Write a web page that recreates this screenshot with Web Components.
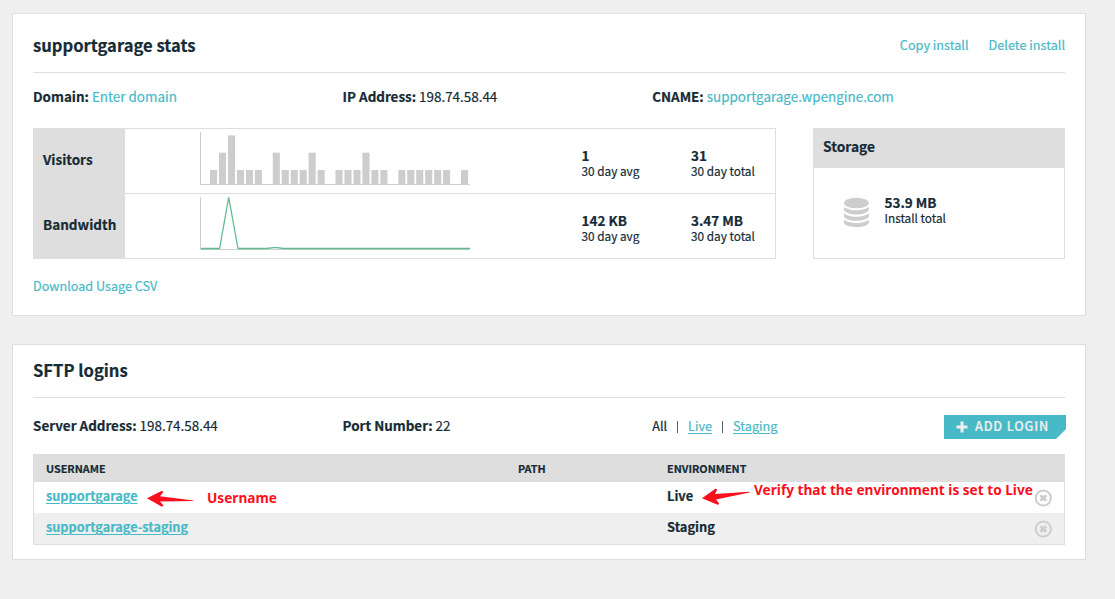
<!DOCTYPE html>
<html lang="en">
<head>
<meta charset="utf-8">
<title>supportgarage stats</title>
<style>
  html, body { margin: 0; height: 100%; background: #efefef; }
  body {
    overflow: hidden;
    --ink: #162b35; --teal: #48b9c7; --line: #dedede; --mark: #cdcdcd; --paper: #fff; --shade: #efefef;
    color: var(--ink);
    font: 13.43px/20px "Noto Sans CJK JP", "Noto Sans CJK SC", "Open Sans", sans-serif;
    -webkit-text-stroke: .2px;
  }
</style>
</head>
<body>
<install-page></install-page>
<script>
const define = (name, html, setup) => {
  const template = document.createElement('template');
  template.innerHTML = html;
  customElements.define(name, class extends HTMLElement {
    connectedCallback() {
      if (this.shadowRoot) return;
      this.attachShadow({ mode: 'open' }).append(template.content.cloneNode(true));
      if (setup) setup(this, this.shadowRoot);
    }
  });
};

define('ui-link', `
  <style>
    :host { display: inline; color: var(--teal); }
    a { color: inherit; text-decoration: none; }
    :host([underlined]) a { text-decoration: underline; text-underline-offset: 2px; text-decoration-thickness: 1px; }
  </style>
  <a><slot></slot></a>`);

define('ui-panel', `
  <style>
    :host { display: block; box-sizing: border-box; width: 1074px; background: var(--paper); border: 1px solid var(--line); padding: 0 20px var(--pad-bottom, 19px); }
    header { display: flex; align-items: center; justify-content: space-between; box-sizing: border-box; height: var(--head, 59px); border-bottom: 1px solid var(--line); }
    h2 { margin: var(--title-top, 4px) 0 0; font-size: 16.6px; line-height: 24px; font-weight: 700; }
    .actions { display: flex; gap: 20px; font-size: 12.7px; padding-top: 4px; }
  </style>
  <header><h2><slot name="title"></slot></h2><div class="actions"><slot name="actions"></slot></div></header>
  <slot></slot>`);

define('info-row', `
  <style>
    :host { display: grid; grid-template-columns: 309.6px 309.6px 1fr; white-space: nowrap; }
  </style>
  <slot></slot>`);

define('info-item', `
  <style>
    :host { display: block; font-size: 13.43px; }
    b { font-weight: 700; font-size: 13.43px; }
  </style>
  <b></b> <slot></slot>`, (el, root) => {
    root.querySelector('b').textContent = el.getAttribute('label');
  });

define('stat-value', `
  <style>
    :host { display: block; line-height: 15px; white-space: nowrap; }
    b { display: block; font-size: 13.5px; }
    small { display: block; font-size: 11.8px; }
  </style>
  <b><slot></slot></b><small></small>`, (el, root) => {
    root.querySelector('small').textContent = el.getAttribute('caption');
  });

define('bar-chart', `
  <style>:host { display: block; width: 270px; height: 53px; } svg { display: block; }</style>
  <svg width="270" height="53"><g fill="#cdcdcd"></g><path d="M.5 0V52.5H270" fill="none" stroke="#cdcdcd"/></svg>`, (el, root) => {
    const tops = [52, 38, 20.7, 3.4];
    root.querySelector('g').innerHTML = [...el.getAttribute('values')].map((v, i) =>
      +v ? `<rect x="${(10 + i * 8.965).toFixed(2)}" y="${tops[v]}" width="7.1" height="${52 - tops[v]}"/>` : '').join('');
  });

define('line-chart', `
  <style>:host { display: block; width: 270px; height: 53px; } svg { display: block; }</style>
  <svg width="270" height="53">
    <path d="M.5 0V52.5H270" fill="none" stroke="#cdcdcd"/>
    <path d="M1 51.5H19.6L28.7 .4L38 51.5H66L74 50.6H77L84 51.5H270" fill="none" stroke="#62bb91" stroke-width="1.3" stroke-linejoin="bevel"/>
  </svg>`);

define('usage-row', `
  <style>
    :host { display: grid; grid-template-columns: 92px 75px 381.5px 109.5px 1fr; height: 65px; box-sizing: border-box; }
    .label { background: var(--line); font-weight: 700; padding: 20px 0 0 10px; font-size: 13.5px; height: 45px; }
    .pad, .chart, ::slotted(stat-value) { border-bottom: 1px solid var(--line); box-sizing: border-box; height: 65px; }
    .chart { padding-top: 3px; }
    ::slotted(stat-value) { padding-top: 19px; }
  </style>
  <div class="label"></div><div class="pad"></div><div class="chart"><slot name="chart"></slot></div><slot></slot>`, (el, root) => {
    root.querySelector('.label').textContent = el.getAttribute('label');
  });

define('usage-table', `
  <style>
    :host { display: block; box-sizing: border-box; width: 743px; height: 131px; border-top: 1px solid var(--line); border-right: 1px solid var(--line); }
  </style>
  <slot></slot>`);

define('storage-card', `
  <style>
    :host { display: block; box-sizing: border-box; width: 252px; height: 131px; border: 1px solid var(--line); }
    header { background: var(--line); height: 39px; line-height: 34px; box-sizing: border-box; padding-left: 9px; font-weight: 700; font-size: 13.8px; }
    .body { display: flex; padding: 27px 0 0 29px; gap: 14.5px; }
    svg { display: block; margin-top: 1.5px; }
  </style>
  <header><slot name="title"></slot></header>
  <div class="body">
    <svg width="27" height="31" viewBox="0 0 27 31" fill="#cdcdcd">
      <ellipse cx="13.4" cy="6" rx="12.4" ry="5.3"/>
      <path d="M1 9.8C5 14.4 21.8 14.4 25.8 9.8V13.3C22 19 4.8 19 1 13.3Z"/>
      <path d="M1 16.3C5 20.9 21.8 20.9 25.8 16.3V19.8C22 25.2 4.8 25.2 1 19.8Z"/>
      <path d="M1 22.6C5 27.2 21.8 27.2 25.8 22.6V26.3C22 31.5 4.8 31.5 1 26.3Z"/>
    </svg>
    <slot></slot>
  </div>`);

define('env-filter', `
  <style>
    :host { display: flex; font-size: 12.7px; }
    i { width: 1px; height: 12px; margin: 5px 10px 0; background: #56646b; }
  </style>
  <span>All</span><i></i><ui-link underlined>Live</ui-link><i></i><ui-link underlined>Staging</ui-link>`);

define('add-button', `
  <style>
    :host { display: flex; align-items: center; box-sizing: border-box; width: 122px; height: 24px; padding-left: 12px; gap: 7px; margin: 0 -1px 0 auto;
      background: var(--teal); color: #efefef; clip-path: polygon(0 0, 100% 0, 100% 14px, 112px 100%, 0 100%); font-size: 12.6px; font-weight: 500; letter-spacing: .85px; white-space: nowrap; }
    span { position: relative; top: -1px; }
  </style>
  <svg width="12" height="12" fill="#efefef"><path d="M4.5 .5h3v4h4v3h-4v4h-3v-4h-4v-3h4z"/></svg><span><slot></slot></span>`);

define('remove-icon', `
  <style>:host { display: block; width: 18px; height: 18px; } svg { display: block; }</style>
  <svg width="18" height="18" fill="none" stroke="#cdcdcd"><circle cx="9.3" cy="9" r="7.6" stroke-width="2"/><path d="M6.500 6.200L12.100 11.800M12.100 6.200L6.500 11.800" stroke-width="2.8"/></svg>`);

define('login-head', `
  <style>
    :host { display: grid; grid-template-columns: 472px 149px 1fr; height: 28px; line-height: 28px; padding-left: 13px; background: var(--line); font-size: 10.8px; font-weight: 700; }
  </style>
  <span>USERNAME</span><span>PATH</span><span>ENVIRONMENT</span>`);

define('login-row', `
  <style>
    :host { display: grid; grid-template-columns: 621px 1fr 18px; height: 31px; line-height: 28px; padding: 0 12px; border: solid var(--line); border-width: 0 1px; font-weight: 700; font-size: 12.9px; box-sizing: border-box; }
    ui-link { font-size: 12.7px; }
    :host([shaded]) { background: var(--shade); }
    remove-icon { margin-top: 6.7px; }
  </style>
  <ui-link underlined><slot></slot></ui-link><span><slot name="env"></slot></span><remove-icon></remove-icon>`);

define('login-table', `
  <style>:host { display: block; border-bottom: 1px solid var(--line); }</style>
  <slot></slot>`);

define('note-arrow', `
  <style>:host { display: block; position: absolute; } svg { display: block; }</style>
  <svg width="50" height="20"><path fill="#fb0f1c"/></svg>`, (el, root) => {
    root.querySelector('path').setAttribute('d', el.getAttribute('shape'));
  });

define('note-text', `
  <style>:host { display: block; position: absolute; color: #fb0f1c; font: 700 13.65px/18px "Noto Sans", "Open Sans", sans-serif; white-space: nowrap; -webkit-text-stroke: 0; }</style>
  <slot></slot>`);

define('install-page', `
  <style>
    :host { display: flex; flex-direction: column; gap: 28px; box-sizing: border-box; width: 1115px; height: 599px; padding: 13px 0 0 12px; position: relative; }
    .info1 { margin: 13px 0 22px; }
    .info2 { margin: 17px 0 15px; height: 24px; }
    .usage { display: flex; justify-content: space-between; margin-bottom: 17px; }
    .csv { display: block; font-size: 12.65px; }
    .tools { display: flex; align-items: flex-start; height: 24px; }
    env-filter { padding-top: 1px; }
    .sftp { --head: 53px; --title-top: -3px; --pad-bottom: 14px; }
  </style>
  <ui-panel>
    <span slot="title">supportgarage stats</span>
    <ui-link slot="actions">Copy install</ui-link>
    <ui-link slot="actions">Delete install</ui-link>
    <info-row class="info1">
      <info-item label="Domain:"><ui-link>Enter domain</ui-link></info-item>
      <info-item label="IP Address:">198.74.58.44</info-item>
      <info-item label="CNAME:"><ui-link>supportgarage.wpengine.com</ui-link></info-item>
    </info-row>
    <div class="usage">
      <usage-table>
        <usage-row label="Visitors">
          <bar-chart slot="chart" values="12311102111210111211011111101"></bar-chart>
          <stat-value caption="30 day avg">1</stat-value>
          <stat-value caption="30 day total">31</stat-value>
        </usage-row>
        <usage-row label="Bandwidth">
          <line-chart slot="chart"></line-chart>
          <stat-value caption="30 day avg">142 KB</stat-value>
          <stat-value caption="30 day total">3.47 MB</stat-value>
        </usage-row>
      </usage-table>
      <storage-card>
        <span slot="title">Storage</span>
        <stat-value caption="Install total">53.9 MB</stat-value>
      </storage-card>
    </div>
    <ui-link class="csv">Download Usage CSV</ui-link>
  </ui-panel>
  <ui-panel class="sftp">
    <span slot="title">SFTP logins</span>
    <info-row class="info2">
      <info-item label="Server Address:">198.74.58.44</info-item>
      <info-item label="Port Number:">22</info-item>
      <div class="tools"><env-filter></env-filter><add-button>ADD LOGIN</add-button></div>
    </info-row>
    <login-table>
      <login-head></login-head>
      <login-row>supportgarage<span slot="env">Live</span></login-row>
      <login-row shaded>supportgarage-staging<span slot="env">Staging</span></login-row>
    </login-table>
  </ui-panel>
  <note-arrow style="left:147px;top:490px" shape="M0 8.3L14 1.2Q16.5 .8 16 2.4L13 6.2L46.5 10.4L46.5 11L13 11.5L16.3 15.2Q16.5 17 14.5 16.5Z"></note-arrow>
  <note-text style="left:207px;top:489px">Username</note-text>
  <note-arrow style="left:702px;top:488px" shape="M0 10.3L13 1Q15 .4 15 2L13 6L47.5 3.8V4.6L14 11.5L17 15.2Q17.2 17 15 16.6Z"></note-arrow>
  <note-text style="left:754px;top:481px">Verify that the environment is set to Live</note-text>`);
</script>
</body>
</html>
